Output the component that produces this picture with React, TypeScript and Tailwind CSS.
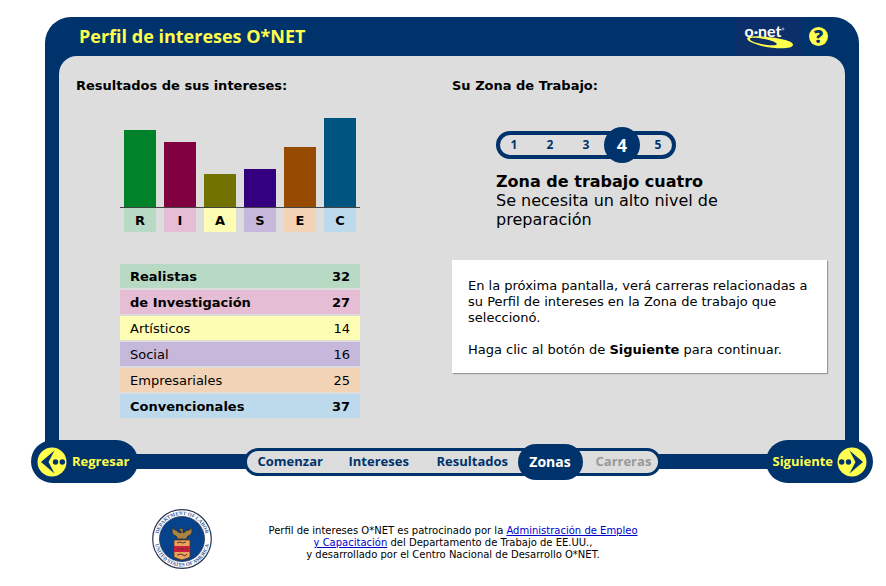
import React from "react";

type Interest = {
  letter: string;
  name: string;
  score: number;
  barHeight: number;
  bar: string;
  tint: string;
  top: boolean;
};

const interests: Interest[] = [
  { letter: "R", name: "Realistas", score: 32, barHeight: 77, bar: "bg-[#00822b]", tint: "bg-[#b8dac4]", top: true },
  { letter: "I", name: "de Investigación", score: 27, barHeight: 65, bar: "bg-[#800040]", tint: "bg-[#e5bdd4]", top: true },
  { letter: "A", name: "Artísticos", score: 14, barHeight: 33, bar: "bg-[#727200]", tint: "bg-[#fdfdb4]", top: false },
  { letter: "S", name: "Social", score: 16, barHeight: 38, bar: "bg-[#330080]", tint: "bg-[#c6b8da]", top: false },
  { letter: "E", name: "Empresariales", score: 25, barHeight: 60, bar: "bg-[#964b00]", tint: "bg-[#f2d3b6]", top: false },
  { letter: "C", name: "Convencionales", score: 37, barHeight: 89, bar: "bg-[#005580]", tint: "bg-[#bddaed]", top: true },
];

function OnetLogo() {
  return (
    <svg width="66" height="38" viewBox="0 0 66 38" role="img" aria-label="O*NET" className="bg-[#0d2f69]">
      <path
        fillRule="evenodd"
        fill="#ffff4d"
        d="M17 18.500C25 17.500 57 21 57 26.500C57 32 38 30.500 28 28.500C18 26.500 8 22 12 19.200C13.500 18.400 15 18.500 17 18.500ZM15 20C11 21.500 18 25 28 26.500C38 28 42 27.500 40.500 25.500C38 22.500 22 19 15 20Z"
      />
      <text x="8.500" y="18.500" fill="#ffffff" fontSize="16" fontWeight="700" fontFamily="Lato, sans-serif">
        o·net
      </text>
      <path d="M47 9.500v3M45.500 11h3" stroke="#b8c8e8" strokeWidth="0.800" />
    </svg>
  );
}

function ArrowDisc({ flip = false }: { flip?: boolean }) {
  return (
    <svg width="30" height="30" viewBox="0 0 30 30" aria-hidden="true" className={flip ? "-scale-x-100" : ""}>
      <circle cx="15" cy="15" r="14.500" fill="#ffff4d" />
      <path d="M17.500 3.500L4 15L17.500 26.500L11.500 15Z" fill="#00336c" />
      <circle cx="18.500" cy="15" r="2.700" fill="#00336c" />
      <circle cx="25.300" cy="15" r="2.700" fill="#00336c" />
    </svg>
  );
}

function LaborSeal() {
  return (
    <svg width="60" height="60" viewBox="0 0 60 60" role="img" aria-label="Department of Labor, United States of America">
      <defs>
        <path id="seal-top" d="M6 30A24 24 0 0 1 54 30" />
        <path id="seal-bottom" d="M2.500 30A27.500 27.500 0 0 0 57.500 30" />
      </defs>
      <circle cx="30" cy="30" r="29.300" fill="#ffffff" stroke="#26344f" strokeWidth="1.200" />
      <circle cx="30" cy="30" r="22.500" fill="#07428c" stroke="#26344f" strokeWidth="0.800" />
      <g fill="#2f5a98" fontSize="5.200" fontFamily="'Liberation Serif', serif" fontWeight="700" textAnchor="middle">
        <text>
          <textPath href="#seal-top" startOffset="50%">DEPARTMENT OF LABOR</textPath>
        </text>
        <text>
          <textPath href="#seal-bottom" startOffset="50%">UNITED STATES OF AMERICA</textPath>
        </text>
      </g>
      <path
        d="M21 18C19 22 20 26 24 27L26 30L34 30L36 27C40 26 41 22 39 18C38 21 37 22 35 21L33 23L31 24L31 20L28 19L27 21L29 22L29 24L26 23L24 21C22 21 21 20 21 18Z"
        fill="#a98344"
        stroke="#312a22"
        strokeWidth="0.800"
      />
      <path d="M22 31H38V48Q34 50 30 51Q26 50 22 48Z" fill="#e9a35a" stroke="#573824" strokeWidth="0.800" />
      <path d="M22 37H38V43H22Z" fill="#c81f3c" />
      <path d="M25 34L28 33L31 34L34 33M25 46L29 45L33 47L35 45M26 41V39M29 41L30 39L32 41M34 41V39" fill="none" stroke="#5d302b" strokeWidth="1" />
    </svg>
  );
}

function InterestResults() {
  return (
    <section>
      <h2 className="text-[13px] leading-5 font-bold">Resultados de sus intereses:</h2>
      <div className="mt-[22px] ml-11 w-60">
        <div className="flex h-[90px] items-end justify-center gap-2 border-b border-[#444444]">
          {interests.map((i) => (
            <div key={i.letter} className={`w-8 ${i.bar}`} style={{ height: i.barHeight }} />
          ))}
        </div>
        <div className="flex justify-center gap-2">
          {interests.map((i) => (
            <div key={i.letter} className={`w-8 pt-[2px] text-center text-[13px] leading-[22px] font-bold ${i.tint}`}>
              {i.letter}
            </div>
          ))}
        </div>
        <table className="mt-[30px] w-full border-separate border-spacing-x-0 border-spacing-y-[2px] text-[13px] leading-[22px]">
          <tbody>
            {interests.map((i) => (
              <tr key={i.name} className={`${i.tint} ${i.top ? "font-bold" : ""}`}>
                <th scope="row" className="pt-[2px] pb-0 pl-[10px] text-left [font-weight:inherit]">
                  {i.name}
                </th>
                <td className="pt-[2px] pr-[10px] pb-0 text-right">{i.score}</td>
              </tr>
            ))}
          </tbody>
        </table>
      </div>
    </section>
  );
}

function JobZone() {
  return (
    <section>
      <h2 className="text-[13px] leading-5 font-bold">Su Zona de Trabajo:</h2>
      <div className="mt-[35px] ml-11">
        <ol className="flex h-7 w-[180px] items-center justify-center rounded-full border-4 border-[#00336c] font-['Open_Sans',sans-serif] text-xs font-bold text-[#00336c]">
          {[1, 2, 3, 4, 5].map((n) =>
            n === 4 ? (
              <li key={n} aria-current="step" className="flex size-9 shrink-0 items-center justify-center rounded-full bg-[#00336c] text-lg text-white">
                {n}
              </li>
            ) : (
              <li key={n} className="w-9 shrink-0 text-center">
                {n}
              </li>
            ),
          )}
        </ol>
        <div className="mt-[13px] max-w-[240px] text-base leading-[19px]">
          <h3 className="font-bold">Zona de trabajo cuatro</h3>
          <p>Se necesita un alto nivel de preparación</p>
        </div>
      </div>
      <div className="mt-[31px] mr-px bg-white px-4 pt-[18px] pb-[15px] text-[13px] leading-4 shadow-[1px_1px_1px_#999999]">
        <p>En la próxima pantalla, verá carreras relacionadas a su Perfil de intereses en la Zona de trabajo que seleccionó.</p>
        <p className="mt-4">
          Haga clic al botón de <b>Siguiente</b> para continuar.
        </p>
      </div>
    </section>
  );
}

export default function App() {
  return (
    <div className="min-h-screen bg-white pt-[17px] pr-[13px] pl-[31px] font-[Verdana,'DejaVu_Sans',sans-serif] text-black">
      <main className="mx-[14px] rounded-t-[26px] bg-[#00336c] px-[14px] pb-[15px]">
        <header className="flex h-[39px] items-center pr-[17px] pl-5">
          <h1 className="flex-1 pb-[2px] font-['Open_Sans',sans-serif] text-lg font-bold text-[#ffff4d]">Perfil de intereses O*NET</h1>
          <OnetLogo />
          <button type="button" aria-label="Ayuda" className="ml-[7px] size-[19px] rounded-full bg-[#ffff4d] text-center font-['Open_Sans',sans-serif] text-lg leading-[19px] font-extrabold text-[#00336c]">
            ?
          </button>
        </header>
        <div className="grid grid-cols-2 rounded-t-[18px] bg-[#dddddd] px-[17px] pt-5 pb-[34px]">
          <InterestResults />
          <JobZone />
        </div>
      </main>

      <div className="-mt-[29px] flex items-center justify-between font-['Open_Sans',sans-serif]">
        <button type="button" className="flex h-[43px] w-[107px] items-center gap-[5px] rounded-full bg-[#00336c] pl-[6px] text-[13px] font-bold text-[#ffff4d]">
          <ArrowDisc />
          Regresar
        </button>
        <nav aria-label="Progreso">
          <ol className="flex h-7 w-[417px] items-center rounded-full border-[3px] border-[#00336c] bg-[#dddddd] pl-[11px] text-[13px] font-bold text-[#00336c]">
            <li className="w-[91px] shrink-0">Comenzar</li>
            <li className="w-[88px] shrink-0">Intereses</li>
            <li className="w-[81px] shrink-0">Resultados</li>
            <li aria-current="step" className="flex h-9 w-[65px] shrink-0 items-center justify-center rounded-[18px] bg-[#00336c] text-sm text-white">
              Zonas
            </li>
            <li className="pl-[13px] text-[#999999]">Carreras</li>
          </ol>
        </nav>
        <button type="button" className="flex h-[43px] w-[107px] items-center justify-end gap-1 rounded-full bg-[#00336c] pr-[6px] text-[13px] font-bold text-[#ffff4d]">
          Siguiente
          <ArrowDisc flip />
        </button>
      </div>

      <footer className="mt-[26px] flex gap-[51px] pl-[121px]">
        <LaborSeal />
        <p className="w-[380px] pt-[16px] text-center text-[10px] leading-3">
          Perfil de intereses O*NET es patrocinado por la{" "}
          <a href="#" className="text-[#0000cc] underline">
            Administración de Empleo
            <br />y Capacitación
          </a>{" "}
          del Departamento de Trabajo de EE.UU.,
          <br />y desarrollado por el Centro Nacional de Desarrollo O*NET.
        </p>
      </footer>
    </div>
  );
}
